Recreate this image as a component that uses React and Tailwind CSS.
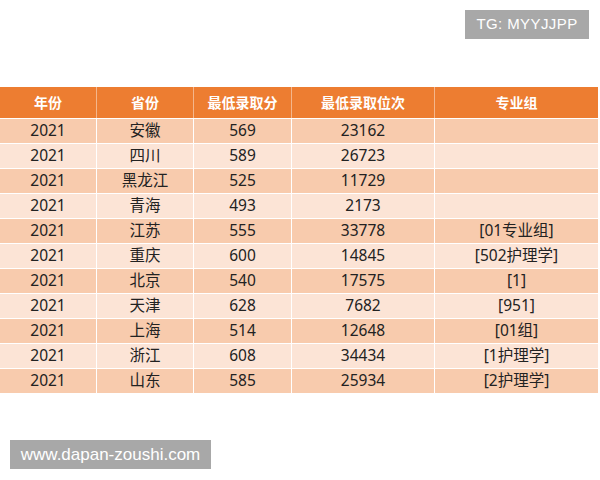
import React from 'react'

const rows = [
  ['2021', '安徽', '569', '23162', ''],
  ['2021', '四川', '589', '26723', ''],
  ['2021', '黑龙江', '525', '11729', ''],
  ['2021', '青海', '493', '2173', ''],
  ['2021', '江苏', '555', '33778', '[01专业组]'],
  ['2021', '重庆', '600', '14845', '[502护理学]'],
  ['2021', '北京', '540', '17575', '[1]'],
  ['2021', '天津', '628', '7682', '[951]'],
  ['2021', '上海', '514', '12648', '[01组]'],
  ['2021', '浙江', '608', '34434', '[1护理学]'],
  ['2021', '山东', '585', '25934', '[2护理学]'],
]

const headers = ['年份', '省份', '最低录取分', '最低录取位次', '专业组']
const cols = 'grid grid-cols-[97px_97px_98px_143px_163px]'

const App = () => {
  return (
    <div
      className="w-[600px] h-[480px] bg-white flex flex-col"
      style={{ fontFamily: '"Noto Sans", "Noto Sans CJK SC", sans-serif' }}
    >
      <div className="h-[87px] flex justify-end items-start pt-[10px] pr-[11px]">
        <div className="h-[29px] w-[124px] bg-[#a8a8a8] text-white text-[15px] flex items-center justify-center tracking-[0.4px]" style={{ fontFamily: '"Liberation Sans", sans-serif' }}>
          TG: MYYJJPP
        </div>
      </div>

      <div className="w-[598px]">
        <div className={`${cols} h-[31px] bg-[#ed7d31] text-white font-bold text-[14px]`}>
          {headers.map((h, i) => (
            <div key={i} className={`flex items-center justify-center ${i < 4 ? 'border-r border-[#f4b68c]' : ''}`}>
              {h}
            </div>
          ))}
        </div>
        {rows.map((r, ri) => (
          <div
            key={ri}
            className={`${cols} h-[25px] border-t border-white text-[15.5px] text-[#222] ${ri % 2 === 0 ? 'bg-[#f8cbad]' : 'bg-[#fce4d6]'}`}
          >
            {r.map((c, ci) => (
              <div key={ci} className={`flex items-center justify-center leading-none ${ci < 4 ? 'border-r border-white' : ''}`}>
                {c}
              </div>
            ))}
          </div>
        ))}
      </div>

      <div className="pt-[47px] pl-[10px]">
        <div className="h-[29px] w-[201px] bg-[#a8a8a8] text-white text-[17px] flex items-center justify-center" style={{ fontFamily: '"Liberation Sans", sans-serif' }}>
          www.dapan-zoushi.com
        </div>
      </div>
    </div>
  )
}

export default App
